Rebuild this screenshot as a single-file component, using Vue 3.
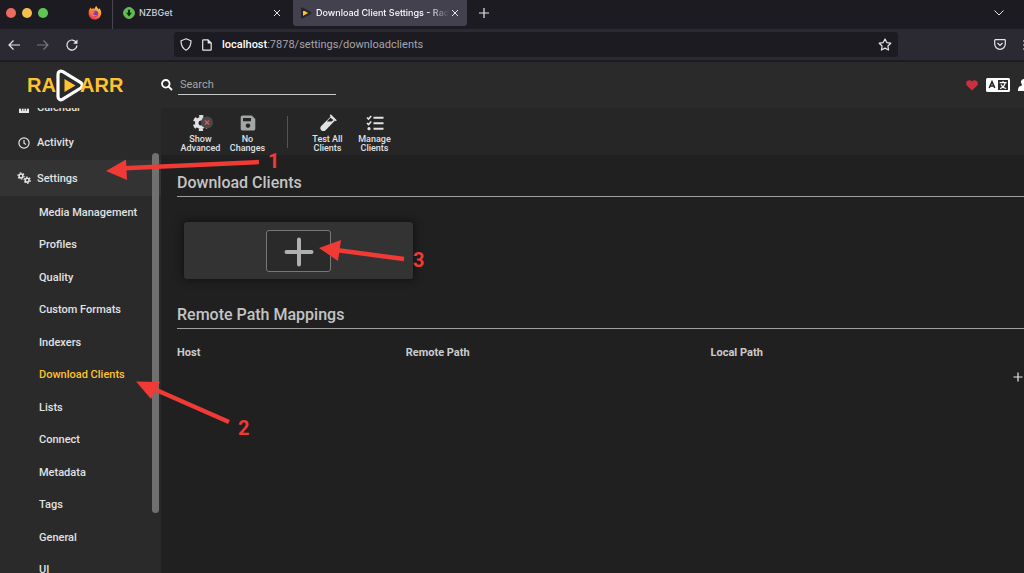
<script setup>
import { ref } from 'vue'

const search = ref('')
const address = ref('localhost:7878/settings/downloadclients')
const settingsPages = [
  'Media Management', 'Profiles', 'Quality', 'Custom Formats', 'Indexers', 'Download Clients',
  'Lists', 'Connect', 'Metadata', 'Tags', 'General', 'UI'
]
const current = ref('Download Clients')
</script>

<template>
  <div class="window">
    <div class="tabs">
      <div class="lights"><i class="red"></i><i class="amber"></i><i class="green"></i></div>
      <div class="pinned">
        <svg width="14" height="14" viewBox="0 0 14 14" aria-hidden="true">
          <defs>
            <linearGradient id="flame" x1="0.8" y1="0" x2="0.2" y2="1">
              <stop offset="0" stop-color="#ffe14a" /><stop offset="0.45" stop-color="#ff8a2a" /><stop offset="1" stop-color="#f0265c" />
            </linearGradient>
          </defs>
          <path d="M1.4 3.2 2.6 1.6 3.6 3 C4.8 2.4 6 2.4 7 2.8 C6.8 1.6 7.4 .6 8.4 0 C8.6 1.6 10 2 10.8 3.4 L11.2 2.2 C12.8 3.8 13.4 5.6 13.2 7.6 C12.8 11.4 10.2 13.6 7 13.6 C3.2 13.6 .6 10.8 .6 7.2 C.6 5.6 .8 4.4 1.4 3.2Z" fill="url(#flame)" />
          <circle cx="7" cy="7.6" r="3.1" fill="#7a3cc8" />
          <path d="M2.8 5.6 C4.6 4.8 5.6 5.4 7.4 5.4 C7 6.6 5.6 6.4 5.2 7.4 C5.4 9 7.2 9.8 9 8.8 C8 11 4.6 11.2 3.2 8.6Z" fill="#ff7a2e" />
        </svg>
      </div>
      <div class="tab first">
        <svg width="12" height="12" viewBox="0 0 12 12" aria-hidden="true">
          <circle cx="6" cy="6" r="5.4" fill="#4fc63c" stroke="#93a893" />
          <path d="M5 2.8h2v3h1.8L6 9.4 3.2 5.8H5z" fill="#10240e" />
        </svg>
        <span class="title">NZBGet</span>
        <button class="plain" aria-label="Close NZBGet">
          <svg width="8" height="8" viewBox="0 0 8 8"><path d="M1 1l6 6M7 1L1 7" /></svg>
        </button>
      </div>
      <div class="tab active">
        <svg width="12" height="12" viewBox="0 0 12 12" aria-hidden="true">
          <path d="M2 1.4v9.2L10.4 6z" fill="#ffc230" stroke="#25252c" stroke-width="2" stroke-linejoin="round" />
        </svg>
        <span class="title fade">Download Client Settings - Radarr</span>
        <button class="plain" aria-label="Close Download Client Settings">
          <svg width="8" height="8" viewBox="0 0 8 8"><path d="M1 1l6 6M7 1L1 7" /></svg>
        </button>
      </div>
      <button class="plain newtab" aria-label="New tab">
        <svg width="10" height="10" viewBox="0 0 10 10"><path d="M5 0v10M0 5h10" /></svg>
      </button>
      <button class="plain alltabs" aria-label="List all tabs">
        <svg width="10" height="6" viewBox="0 0 10 6"><path d="M.5 .5L5 5 9.500 .5" /></svg>
      </button>
    </div>

    <div class="navbar">
      <button class="plain" aria-label="Back">
        <svg width="12" height="12" viewBox="0 0 12 12"><path d="M12 6H1M5.500 1.500L1 6l4.500 4.500" /></svg>
      </button>
      <button class="plain dim" aria-label="Forward">
        <svg width="12" height="12" viewBox="0 0 12 12"><path d="M0 6h11M6.500 1.500L11 6l-4.500 4.500" /></svg>
      </button>
      <button class="plain" aria-label="Reload">
        <svg width="12" height="12" viewBox="0 0 12 12"><path d="M10.400 3.600A5 5 0 1 0 11 6.400" /><path class="solid" d="M11.500 .4v4.400H7.100z" /></svg>
      </button>
      <div class="urlbar">
        <svg width="12" height="13" viewBox="0 0 12 13" aria-hidden="true"><path d="M6 .8l5 2c0 4.600-1 7.400-5 9.400C2 10.200 1 7.400 1 2.800z" /></svg>
        <svg width="10" height="12" viewBox="0 0 10 12" aria-hidden="true"><path d="M1.500 .8H6l3.200 3.200v6.400c0 .5-.3.800-.8.800H1.500c-.5 0-.8-.3-.8-.8V1.600c0-.5.3-.8.8-.8z" /><path class="solid" d="M5.600 .6v4h4z" /></svg>
        <a class="address" href="#" :aria-label="address"><b>localhost</b>:7878/settings/downloadclients</a>
        <button class="plain" aria-label="Bookmark this page">
          <svg width="14" height="13" viewBox="0 0 14 13"><path d="M7 1l1.800 3.600 4 .6-2.900 2.800.7 4L7 10.100 3.400 12l.7-4L1.200 5.200l4-.6z" stroke-linejoin="round" /></svg>
        </button>
      </div>
      <button class="plain pocket" aria-label="Save to Pocket">
        <svg width="12" height="11" viewBox="0 0 12 11"><path d="M1.400 .7h9.200c.4 0 .7.300.7.700V5a5.300 5.300 0 0 1-10.600 0V1.400c0-.4.3-.7.7-.7zM3.500 4L6 6.400 8.500 4" /></svg>
      </button>
      <button class="plain menu" aria-label="Application menu">
        <svg width="12" height="10" viewBox="0 0 12 10"><path d="M0 1h12M0 5h12M0 9h12" /></svg>
      </button>
    </div>

    <header class="header">
      <a class="brand" href="#" aria-label="Radarr home">
        <span class="word">RA</span>
        <svg width="28" height="33" viewBox="0 0 28 33" aria-hidden="true">
          <path d="M2 5.600C2 2.600 4.400 1.200 6.800 2.600L24.800 13.600C26.800 15 26.800 17.600 24.800 19L6.800 30.200C4.400 31.600 2 30.400 2 27.400Z" fill="#2a2a2a" stroke="#fff" stroke-width="3.200" />
          <path d="M8.500 10v13l11-6.500z" fill="#ffc230" />
        </svg>
        <span class="word arr">ARR</span>
      </a>
      <label class="search">
        <svg width="12" height="12" viewBox="0 0 12 12" aria-hidden="true"><circle cx="4.800" cy="4.800" r="3.800" /><path d="M7.600 7.600L11 11" /></svg>
        <input v-model="search" type="text" placeholder="Search" aria-label="Search">
      </label>
      <div class="actions">
        <a href="#" aria-label="Donate">
          <svg width="12" height="11" viewBox="0 0 12 11"><path d="M6 10.600L1.100 5.700C-.3 4.200-.2 2 1.200.9 2.700-.2 4.700 0 6 1.700 7.300 0 9.300-.2 10.800.9c1.400 1.100 1.500 3.300.1 4.800z" fill="#cd2f40" /></svg>
        </a>
        <button class="plain" aria-label="Language">
          <svg width="24" height="14" viewBox="0 0 24 14">
            <rect width="24" height="14" rx="1.500" fill="#fff" stroke="none" />
            <path d="M3.200 10L6 3.600 8.800 10M4.200 8h3.600" stroke="#222" stroke-width="1.500" />
            <path d="M12 2h10v10H12z" fill="#2a2a2a" stroke="none" />
            <path d="M13.600 4.600h7M17 3v1.600M19.200 4.600C18.600 7.600 16.600 9.700 14 10.500M14.900 6.400c1 2 2.800 3.500 5.300 4.100" stroke="#fff" stroke-width="1.200" />
          </svg>
        </button>
        <button class="plain user" aria-label="User menu">
          <svg width="12" height="12" viewBox="0 0 12 12"><path d="M6 0a3 3 0 0 1 2.300 5C7.800 6 8.400 6.900 10 7.300 11.500 7.800 12 9 12 12H0C0 9 .5 7.800 2 7.300 3.600 6.900 4.200 6 3.700 5A3 3 0 0 1 6 0z" fill="#fff" stroke="none" /></svg>
        </button>
      </div>
    </header>

    <div class="page">
      <nav class="sidebar" aria-label="Main">
        <div class="scrolled">
          <a class="item" href="#">
            <svg width="12" height="12" viewBox="0 0 12 12" aria-hidden="true"><path class="solid" d="M1 1h10v2H1zM1 4h10v7H1z" /><path d="M3.500 4v5M6 4v5M8.500 4v5M1 6.500h10" stroke="#2a2a2a" stroke-width=".7" /></svg>
            <span>Calendar</span>
          </a>
          <a class="item" href="#">
            <svg width="12" height="12" viewBox="0 0 12 12" aria-hidden="true"><circle cx="6" cy="6" r="5.100" /><path d="M6 3v3.200l2 1.200" /></svg>
            <span>Activity</span>
          </a>
          <a class="item open" href="#">
            <svg width="14" height="12" viewBox="0 0 14 12" aria-hidden="true">
              <circle cx="4" cy="4" r="1.900" stroke-width="1.500" /><circle cx="4" cy="4" r="3.100" stroke-width="1.200" stroke-dasharray="1.600 1.646" />
              <circle cx="10.200" cy="8.200" r="1.900" stroke-width="1.500" /><circle cx="10.200" cy="8.200" r="3.100" stroke-width="1.200" stroke-dasharray="1.600 1.646" />
            </svg>
            <span>Settings</span>
          </a>
          <div class="children">
            <a v-for="p in settingsPages" :key="p" href="#" :class="{ current: p === current }" @click.prevent="current = p">{{ p }}</a>
          </div>
        </div>
        <div class="thumb"></div>
      </nav>

      <main class="main">
        <div class="toolbar">
          <button class="tool">
            <svg width="24" height="18" viewBox="0 0 24 18" aria-hidden="true">
              <circle cx="12" cy="9" r="4.300" fill="none" stroke="#e1e2e3" stroke-width="3.600" />
              <circle cx="12" cy="9" r="6.800" fill="none" stroke="#e1e2e3" stroke-width="2.600" stroke-dasharray="4 3.121" stroke-dashoffset="2" transform="rotate(-30 12 9)" />
              <circle cx="18" cy="8.500" r="6" fill="#494949" /><path d="M16 6.500l4 4M20 6.500l-4 4" stroke="#f05050" stroke-width="1.300" />
            </svg>
            <span>Show<br>Advanced</span>
          </button>
          <button class="tool">
            <svg width="16" height="18" viewBox="0 0 16 18" aria-hidden="true">
              <path fill-rule="evenodd" d="M2.500 1.500h9.300L15.300 5v9.700c0 1-.8 1.800-1.800 1.800h-11c-1 0-1.800-.8-1.800-1.800V3.300c0-1 .8-1.800 1.800-1.800zM3 4v3.300h8V4zM8 9.400a2.300 2.300 0 1 0 .01 0z" fill="#a4a5a6" />
            </svg>
            <span>No<br>Changes</span>
          </button>
          <div class="divider"></div>
          <button class="tool">
            <svg width="18" height="18" viewBox="0 0 18 18" aria-hidden="true">
              <path fill-rule="evenodd" d="M10.800 1.200l1-1 6 6-1 1-.8-.6-9.400 9.600c-1.300 1.200-3.300 1.200-4.400 0-1.200-1.200-1.200-3 0-4.300l9.300-9.200zM11.500 3.800L7.800 7.600h4.800l1.800-1.700z" fill="#e1e2e3" />
            </svg>
            <span>Test All<br>Clients</span>
          </button>
          <button class="tool">
            <svg width="18" height="18" viewBox="0 0 18 18" aria-hidden="true">
              <path d="M7.500 3.700h10M7.500 9.200h10M7.500 14.700h10" stroke="#e1e2e3" stroke-width="2" />
              <path d="M1 3.500l1.500 1.600L5.200 2M1 9l1.500 1.600L5.200 7.500" fill="none" stroke="#e1e2e3" stroke-width="1.600" />
              <circle cx="3" cy="14.700" r="1.600" fill="#e1e2e3" />
            </svg>
            <span>Manage<br>Clients</span>
          </button>
        </div>

        <section class="section">
          <h2>Download Clients</h2>
          <button class="card" aria-label="Add download client">
            <span class="add"><svg width="30" height="30" viewBox="0 0 30 30"><path d="M15 2.500v25M2.500 15h25" /></svg></span>
          </button>
        </section>

        <section class="section">
          <h2>Remote Path Mappings</h2>
          <table>
            <thead><tr><th class="host">Host</th><th class="remote">Remote Path</th><th>Local Path</th></tr></thead>
          </table>
          <div class="addrow">
            <button class="plain" aria-label="Add remote path mapping">
              <svg width="10" height="10" viewBox="0 0 10 10"><path d="M5 .5v9M.5 5h9" /></svg>
            </button>
          </div>
        </section>
      </main>
    </div>

    <svg class="notes" width="430" height="450" viewBox="0 0 430 450">
      <path d="M259 162L124 168.300M229 422L154 389M404 259L336 250" stroke="#ef3a36" stroke-width="4.500" />
      <path d="M106 171L126 159.500 127 180zM136 381.500L160 382 151 399zM319 248L341 240 338 261z" fill="#ef3a36" />
      <text x="268" y="168">1</text>
      <text x="238" y="435">2</text>
      <text x="413" y="267">3</text>
    </svg>
  </div>
</template>

<style>
body { margin: 0; background: #202020; }
</style>

<style scoped>
.window {
  position: relative;
  display: flex;
  flex-direction: column;
  height: 100vh;
  overflow: hidden;
  font-family: Roboto, "Liberation Sans", sans-serif;
  font-size: 12px;
  color: #e1e2e3;
  background: #202020;
}
.window * { box-sizing: border-box; }
a { color: inherit; text-decoration: none; }
svg { display: block; flex: none; }
button { font: inherit; color: inherit; cursor: pointer; }
.plain { display: flex; padding: 0; border: 0; background: none; flex: none; }
.plain svg, .urlbar svg, .item svg { fill: none; stroke: #e6e6ea; stroke-width: 1.2; }
.plain .solid, .urlbar .solid, .item .solid { fill: #e6e6ea; stroke: none; }

.tabs {
  display: flex;
  align-items: center;
  flex: none;
  height: 29px;
  padding-bottom: 4px;
  background: #1c1b22;
  font: 500 9px Inter, "Liberation Sans", sans-serif;
}
.lights { display: flex; gap: 6px; width: 88px; padding-left: 6px; }
.lights i { width: 10px; height: 10px; border-radius: 50%; }
.red { background: #ed6a5e; }
.amber { background: #f5bf4f; }
.green { background: #61c554; }
.pinned { width: 24px; }
.tab { display: flex; align-items: center; gap: 4px; height: 29px; }
.first { width: 181px; margin-bottom: -4px; padding: 0 12px 4px 10px; border-left: 1px solid #46454d; color: #d2d2d8; }
.active { width: 174px; height: 26px; margin-bottom: -1px; padding: 0 8px 1px 7px; border-radius: 0 0 3px 3px; background: #42414d; color: #fbfbfe; }
.title { flex: 1; overflow: hidden; white-space: nowrap; }
.fade { margin-right: -2px; mask-image: linear-gradient(to right, #000 85%, transparent); }
.tab .plain svg, .alltabs svg { stroke-width: 1; }
.newtab { margin-left: 12px; }
.alltabs { margin-left: auto; margin-right: 20px; }

.navbar {
  display: flex;
  align-items: center;
  flex: none;
  gap: 17px;
  height: 33px;
  padding-left: 8px;
  overflow: hidden;
  background: #2b2a33;
  border-bottom: 2px solid #1c1b22;
}
.dim { opacity: 0.4; }
.urlbar {
  display: flex;
  align-items: center;
  flex: 1;
  gap: 10px;
  height: 25px;
  margin-left: 79px;
  padding: 0 6px;
  border-radius: 3px;
  background: #1c1b22;
  font-size: 11px;
  color: #a5a5ac;
}
.address { flex: 1; }
.address b { font-weight: 500; color: #fbfbfe; }
.pocket { margin-left: 79px; }
.menu { margin-right: -11px; }

.header { display: flex; align-items: center; flex: none; height: 46px; background: #2a2a2a; }
.brand { display: flex; align-items: center; width: 161px; padding-left: 23px; }
.word { width: 33px; font: 700 20px "Liberation Sans", sans-serif; color: #ffc230; text-align: right; }
.arr { margin-left: -4px; text-align: left; }
.search { display: flex; align-items: center; gap: 5px; }
.search svg { fill: none; stroke: #fff; stroke-width: 1.8; }
.search input {
  width: 158px;
  height: 19px;
  padding: 0 2px;
  border: 0;
  border-bottom: 1px solid #c8c9ca;
  outline: 0;
  background: none;
  color: #e1e2e3;
  font: 11px Roboto, sans-serif;
}
.search input::placeholder { color: #a5a5a5; opacity: 1; }
.actions { display: flex; align-items: center; gap: 8px; margin-left: auto; margin-right: -6px; }

.page { display: flex; flex: 1; min-height: 0; }
.sidebar { position: relative; flex: none; width: 161px; overflow: hidden; background: #2a2a2a; font-size: 11px; font-weight: 500; }
.scrolled { margin-top: -18px; }
.item { display: flex; align-items: center; height: 35px; padding-left: 17px; }
.item svg { width: 14px; margin-right: 6px; }
.open { height: 36px; background: #333; }
.children { display: grid; grid-auto-rows: 1fr; height: 390px; }
.children a { display: flex; align-items: center; padding-left: 39px; }
.children .current { color: #ffc230; }
.thumb { position: absolute; top: 45px; right: 2px; width: 7px; height: 360px; border-radius: 4px; background: #707070; }

.main { flex: 1; min-width: 0; }
.toolbar { display: flex; height: 47px; padding: 6px 0 0 16px; background: #262626; }
.tool {
  display: flex;
  flex-direction: column;
  align-items: center;
  width: 47px;
  padding: 0;
  border: 0;
  background: none;
  font-size: 9px;
  font-weight: 500;
  line-height: 9px;
  white-space: nowrap;
}
.tool span { margin-top: 3px; }
.divider { width: 1px; height: 32px; margin: 2px 16px 0; background: #555; }

.section { padding-left: 16px; }
h2 { height: 42px; margin: 0; padding-top: 18px; border-bottom: 1px solid #a0a0a0; font-size: 16px; line-height: 20px; font-weight: 500; color: #c4c4c4; }
.card {
  display: flex;
  justify-content: center;
  align-items: center;
  width: 229px;
  height: 57px;
  margin: 25px 0 8px 7px;
  padding: 0;
  border: 0;
  border-radius: 3px;
  background: #333;
  box-shadow: 0 0 8px 1px #111;
}
.add { display: flex; justify-content: center; align-items: center; width: 65px; height: 42px; padding-top: 2px; border: 1px solid #777; border-radius: 3px; background: #2a2a2a; }
.add svg { stroke: #b0b0b0; stroke-width: 4; stroke-linecap: round; }
table { width: 100%; margin-top: 16px; border-collapse: collapse; }
th { padding: 0; text-align: left; font-size: 11px; font-weight: 700; line-height: 16px; color: #ccc; }
.host { width: 27%; }
.remote { width: 36%; }
.addrow { display: flex; justify-content: flex-end; padding: 11px 1px 0 0; }
.notes { position: absolute; top: 0; left: 0; pointer-events: none; }
.notes text { font: 700 20px Roboto, sans-serif; fill: #ef3a36; }
</style>
